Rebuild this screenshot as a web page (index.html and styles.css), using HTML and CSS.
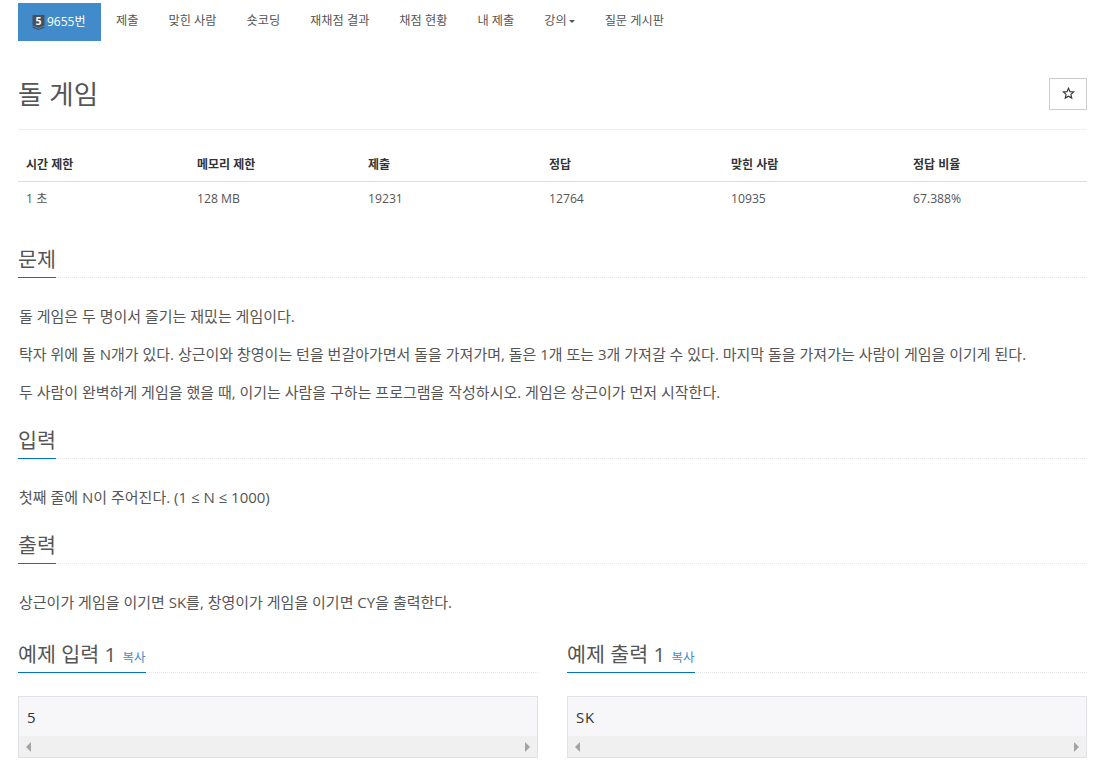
FILE: index.html
```html
<!DOCTYPE html>
<html lang="ko">
<head>
<meta charset="utf-8">
<title>돌 게임</title>
<link rel="stylesheet" href="styles.css">
</head>
<body>
<div class="page">
  <ul class="tabs">
    <li class="tab active"><a href="#"><svg class="tier" viewBox="0 0 13 15" width="13" height="15"><path d="M0.5 0h12v10.5l-6 2.3-6-2.3z" fill="#44505c"/><path d="M0.5 11.6l6 2.2 6-2.2v1.2l-6 2.2-6-2.2z" fill="#44505c"/><text x="6.5" y="9.6" class="tier-num">5</text></svg>9655번</a></li>
    <li class="tab"><a href="#">제출</a></li>
    <li class="tab"><a href="#">맞힌 사람</a></li>
    <li class="tab"><a href="#">숏코딩</a></li>
    <li class="tab"><a href="#">재채점 결과</a></li>
    <li class="tab"><a href="#">채점 현황</a></li>
    <li class="tab"><a href="#">내 제출</a></li>
    <li class="tab"><a href="#">강의<span class="caret"></span></a></li>
    <li class="tab"><a href="#">질문 게시판</a></li>
  </ul>

  <div class="title-row">
    <h1 class="title">돌 게임</h1>
    <button class="star" type="button"><svg viewBox="0 0 14 14" width="13" height="13"><path d="M7 1.3l1.6 3.7 4 .4-3 2.6.9 3.9L7 9.9l-3.5 2 .9-3.9-3-2.6 4-.4z" fill="none" stroke="#333" stroke-width="1.2"/></svg></button>
  </div>

  <table class="info">
    <thead>
      <tr><th class="c1">시간 제한</th><th class="c2">메모리 제한</th><th class="c3">제출</th><th class="c4">정답</th><th class="c5">맞힌 사람</th><th>정답 비율</th></tr>
    </thead>
    <tbody>
      <tr><td>1 초</td><td>128 MB</td><td>19231</td><td>12764</td><td>10935</td><td>67.388%</td></tr>
    </tbody>
  </table>

  <section class="sec first">
    <div class="headline"><h2>문제</h2></div>
    <p>돌 게임은 두 명이서 즐기는 재밌는 게임이다.</p>
    <p>탁자 위에 돌 N개가 있다. 상근이와 창영이는 턴을 번갈아가면서 돌을 가져가며, 돌은 1개 또는 3개 가져갈 수 있다. 마지막 돌을 가져가는 사람이 게임을 이기게 된다.</p>
    <p>두 사람이 완벽하게 게임을 했을 때, 이기는 사람을 구하는 프로그램을 작성하시오. 게임은 상근이가 먼저 시작한다.</p>
  </section>

  <section class="sec">
    <div class="headline"><h2>입력</h2></div>
    <p>첫째 줄에 N이 주어진다. (1 ≤ N ≤ 1000)</p>
  </section>

  <section class="sec">
    <div class="headline"><h2>출력</h2></div>
    <p>상근이가 게임을 이기면 SK를, 창영이가 게임을 이기면 CY을 출력한다.</p>
  </section>

  <div class="samples">
    <section class="sample">
      <div class="headline"><h2>예제 입력 1 <a class="copy" href="#">복사</a></h2></div>
      <div class="code">
        <pre>5</pre>
        <div class="hbar"><span class="arrow left"></span><span class="arrow right"></span></div>
      </div>
    </section>
    <section class="sample">
      <div class="headline"><h2>예제 출력 1 <a class="copy" href="#">복사</a></h2></div>
      <div class="code">
        <pre>SK</pre>
        <div class="hbar"><span class="arrow left"></span><span class="arrow right"></span></div>
      </div>
    </section>
  </div>
</div>
</body>
</html>
```
FILE: styles.css
```css
* { box-sizing: border-box; }
html, body { margin: 0; padding: 0; height: 776px; overflow: hidden; background: #fff; }
body {
  font-family: "Open Sans", "Noto Sans CJK KR", sans-serif;
  font-size: 13px;
  line-height: 1.5;
  color: #555;
}
.page { width: 1069px; margin-left: 18px; padding-top: 3px; }

.tabs { list-style: none; margin: 0; padding: 0; display: flex; height: 38px; }
.tab a {
  display: flex;
  align-items: center;
  height: 38px;
  padding: 0 15px 2px;
  color: #555;
  font-size: 12.2px;
  text-decoration: none;
  white-space: nowrap;
}
.tab.active a { background: #428bca; color: #fff; padding: 0 0 0 14px; width: 83px; font-size: 12px; }
.tier { margin-right: 2px; flex: none; }
.tier-num { font: 700 10.5px "Open Sans", sans-serif; fill: #fff; text-anchor: middle; }
.caret {
  display: inline-block;
  margin-left: 2px;
  border-top: 3px solid #555;
  border-left: 3px solid transparent;
  border-right: 3px solid transparent;
}

.title-row {
  display: flex;
  justify-content: space-between;
  align-items: center;
  height: 89px;
  padding-top: 17px;
  border-bottom: 1px solid #eee;
}
.title { margin: 0; font-size: 26.5px; font-weight: 400; line-height: 36px; color: #555; }
.star {
  width: 38px;
  height: 32px;
  padding: 0;
  border: 1px solid #ccc;
  background: #fff;
  display: flex;
  align-items: center;
  justify-content: center;
}

.info { width: 100%; margin-top: 18px; border-collapse: collapse; table-layout: fixed; font-size: 12.2px; }
.info th { text-align: left; padding: 2px 8px 0; height: 33px; color: #333; font-weight: 700; font-size: 12px; border-bottom: 1px solid #ddd; }
.info td { padding: 2px 8px 0; height: 34px; color: #555; }
.c1, .c2 { width: 171px; }
.c3 { width: 181px; }
.c4, .c5 { width: 182px; }

.sec { margin-top: 22px; }
.sec.first { margin-top: 31px; }
.headline { border-bottom: 1px dotted #e5e5e5; height: 32px; }
.headline h2 {
  display: inline-block;
  margin: 0;
  height: 32px;
  line-height: 27px;
  font-size: 20.6px;
  font-weight: 400;
  color: #555;
  border-bottom: 1px solid #0076c0;
}
.sec p { margin: 0 0 12px 1px; font-size: 15px; line-height: 26px; height: 26px; }
.sec .headline + p { margin-top: 25px; }
.sec p:last-child { margin-bottom: 0; }

.samples { display: grid; grid-template-columns: 520px 520px; column-gap: 29px; margin-top: 26px; }
.copy { font-size: 12.5px; color: #428bca; text-decoration: none; margin-left: 1px; }
.code { margin-top: 23px; height: 62px; border: 1px solid #e1e1e8; background: #f7f7f9; }
.code pre {
  margin: 0;
  height: 39px;
  padding: 10px 8px;
  font-family: "Open Sans", sans-serif;
  font-size: 15px;
  letter-spacing: 0.8px;
  line-height: 21px;
  color: #333;
}
.hbar { height: 21px; background: #f0f0f0; display: flex; justify-content: space-between; align-items: center; padding: 0 7px; }
.arrow { width: 0; height: 0; border-top: 5px solid transparent; border-bottom: 5px solid transparent; }
.arrow.left { border-right: 5px solid #a3a3a3; }
.arrow.right { border-left: 5px solid #a3a3a3; }
```
